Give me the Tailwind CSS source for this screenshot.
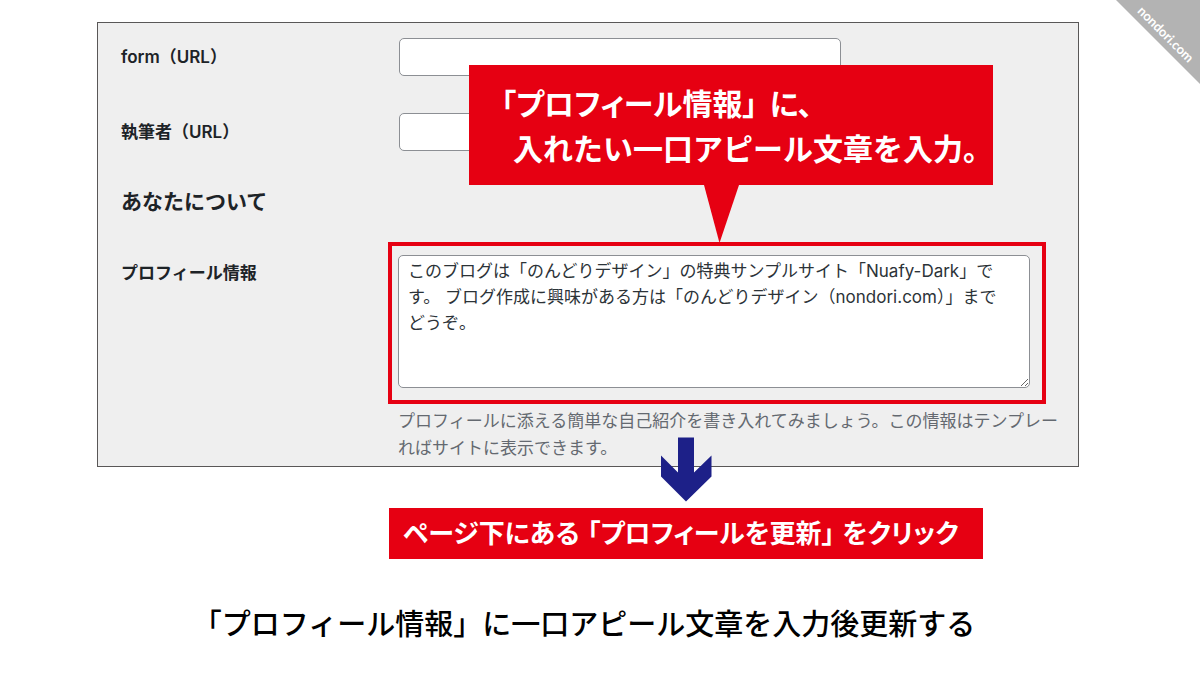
<!DOCTYPE html>
<html lang="ja">
<head>
    <meta charset="UTF-8">
    <meta name="viewport" content="width=device-width, initial-scale=1.0">
    <title>プロフィール情報の更新</title>
    <script src="https://cdn.jsdelivr.net/npm/@tailwindcss/browser@4"></script>
</head>
<body class="relative min-h-screen overflow-x-hidden bg-white font-['Inter','Noto_Sans_CJK_JP',sans-serif]">
    <!-- Corner ribbon -->
    <div class="absolute top-0 right-0 w-[84px] h-[84px]">
        <svg class="absolute inset-0" width="84" height="84" viewBox="0 0 84 84" aria-hidden="true">
            <path d="M0 0H84V84Z" fill="#b3b3b3"/>
        </svg>
        <a href="#" class="absolute top-[26px] left-[6px] w-[88px] rotate-45 text-center text-[13px] leading-4 font-bold text-white font-['Lato',sans-serif]">nondori.com</a>
    </div>

    <main class="pt-[22px] pl-[97px] pr-[121px]">
        <div class="relative">
            <!-- Settings panel -->
            <form class="overflow-hidden border border-[#595757] bg-[#efefef] pt-[15px] pb-1 pl-[23px] text-[#1d2327]">
                <div class="grid grid-cols-[278px_1fr] gap-y-[37px] items-center">
                    <label for="form-url" class="text-[17px] leading-[26px] font-semibold">form（URL）</label>
                    <input type="text" id="form-url" class="w-full max-w-[442px] h-[38px] px-2 rounded-[5px] border border-[#8c8f94] bg-white">
                    <label for="author-url" class="text-[17px] leading-[26px] font-semibold">執筆者（URL）</label>
                    <input type="text" id="author-url" class="w-full max-w-[442px] h-[38px] px-2 rounded-[5px] border border-[#8c8f94] bg-white">
                </div>

                <h2 class="mt-[37px] text-[21px] leading-7 font-bold">あなたについて</h2>

                <div class="mt-[26px] grid grid-cols-[267px_1fr] items-start">
                    <label for="profile" class="pt-[18px] text-[17px] leading-[26px] font-semibold">プロフィール情報</label>
                    <div class="min-w-0">
                        <div class="w-full max-w-[658px] border-4 border-[#e60012] pt-[9px] pb-3 pl-[6px] pr-3">
                            <textarea id="profile" class="block w-full h-[133px] resize overflow-hidden rounded-[5px] border border-[#8c8f94] bg-white pt-[2px] pl-[9px] pr-5 text-[17px] leading-[26px] text-[#2c3338]">このブログは「のんどりデザイン」の特典サンプルサイト「Nuafy-Dark」です。 ブログ作成に興味がある方は「のんどりデザイン（nondori.com）」までどうぞ。</textarea>
                        </div>
                        <p class="mt-1 pl-[10px] text-[17px] leading-[27px] whitespace-nowrap text-[#646970]">プロフィールに添える簡単な自己紹介を書き入れてみましょう。この情報はテンプレー<br>ればサイトに表示できます。</p>
                    </div>
                </div>
            </form>

            <!-- Callout -->
            <div class="absolute top-[43px] left-[372px] w-[524px] bg-[#e60012] py-[15px] text-[30px] leading-[45px] font-bold whitespace-nowrap text-white font-['Noto_Sans_CJK_JP',sans-serif]">
                <p class="pl-8 [font-feature-settings:'palt']">「プロフィール情報」<span class="ml-3">に、</span></p>
                <p class="pl-[44px]">入れたい一口アピール文章を入力。</p>
                <svg class="absolute top-full left-[235px]" width="35" height="58" viewBox="0 0 35 58" aria-hidden="true">
                    <path d="M0 0H35L15.500 58Z" fill="#e60012"/>
                </svg>
            </div>

            <!-- Arrow to the next step -->
            <svg class="absolute top-[415px] left-[564px]" width="51" height="65" viewBox="0 0 51 65" aria-hidden="true">
                <path d="M17 0.500H33V35.500L50.500 18.500V39.500L25 64.500L0 39.500V18.500L17 35.500Z" fill="#1d2088"/>
            </svg>
        </div>

        <p class="mt-[41px] ml-[292px] w-[594px] bg-[#e60012] pb-[3px] pl-[14px] text-[26px] leading-[48px] font-bold whitespace-nowrap text-white font-['Noto_Sans_CJK_JP',sans-serif] [font-feature-settings:'palt']">ページ下にある<span class="mx-2">「プロフィールを更新」</span>をクリック</p>

        <h1 class="mt-[43px] pr-2 text-center text-[29px] leading-10 font-medium whitespace-nowrap text-black font-['Noto_Sans_CJK_JP',sans-serif]">「プロフィール情報」に一口アピール文章を入力後更新する</h1>
    </main>
</body>
</html>
